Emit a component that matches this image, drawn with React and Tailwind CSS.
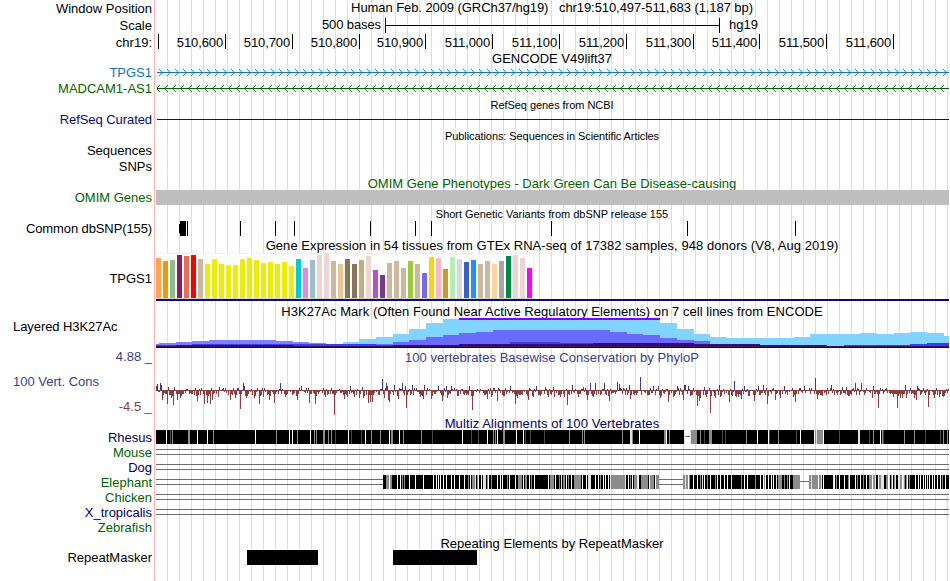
const GRID =
  "bg-[linear-gradient(to_right,#fff_1px,transparent_1px),repeating-linear-gradient(to_right,#dcdaf8_0px,#dcdaf8_1px,transparent_1px,transparent_12px)]";

// Small deterministic generator for the low-amplitude signal between peaks.
function makeRandom(seed) {
  let s = seed;
  return () => {
    s = (s * 1664525 + 1013904223) % 4294967296;
    return s / 4294967296;
  };
}

function Row({ h, label, color = "text-black", left, labelClass = "", children }) {
  return (
    <div className={`flex ${h}`}>
      <div
        className={`flex w-[154px] shrink-0 items-center whitespace-pre ${
          left ? "justify-start pl-[13px]" : "justify-end pr-[2px]"
        } ${color} ${labelClass}`}
      >
        {label}
      </div>
      <div className="w-[796px] shrink-0 border-l border-[#ffb4b4]">{children}</div>
    </div>
  );
}

function Title({ children, className = "text-black" }) {
  return (
    <div className={`flex h-full items-center justify-center whitespace-pre pr-px ${className}`}>
      {children}
    </div>
  );
}

function Plot({ y, h, children }) {
  return (
    <svg
      className="block"
      width="795"
      height={h}
      viewBox={`155 ${y} 795 ${h}`}
      shapeRendering="crispEdges"
    >
      {children}
    </svg>
  );
}

const TICKS = [
  [225, "510,600"], [292, "510,700"], [359, "510,800"], [425, "510,900"],
  [492, "511,000"], [559, "511,100"], [626, "511,200"], [693, "511,300"],
  [759, "511,400"], [826, "511,500"], [893, "511,600"],
];

// Chevrons are stepped one pixel per row, as on the browser's gene lines.
function Gene({ y, color, dir }) {
  const d = Array.from({ length: 99 }, (_, i) => i * 8)
    .map((m) =>
      [-3, -2, -1, 1, 2, 3]
        .map((o) => {
          const a = Math.abs(o);
          const x = dir > 0 ? 162 + m - a : 156 + m + a;
          return `M${x} ${y + o}h1v1h-1z`;
        })
        .join("")
    )
    .join("");
  return (
    <>
      <rect x="157" y={y} width="792" height="1" fill={color} />
      <path d={d} fill={color} fillOpacity="0.85" />
    </>
  );
}

const SNPS = [187, 240, 275, 294, 370, 415, 431, 551, 687, 795];

const TISSUES = [
  [40, "#ffa54f"], [37, "#ee9a00"], [38, "#8fbc8f"], [43, "#8b1c62"], [42, "#ee6a50"],
  [43, "#ff0000"], [39, "#cdb79e"], [34, "#eeee00"], [39, "#eeee00"], [34, "#eeee00"],
  [33, "#eeee00"], [33, "#eeee00"], [39, "#eeee00"], [40, "#eeee00"], [38, "#eeee00"],
  [35, "#eeee00"], [36, "#eeee00"], [34, "#eeee00"], [36, "#eeee00"], [32, "#eeee00"],
  [39, "#00cdcd"], [30, "#ee82ee"], [38, "#9ac0cd"], [43, "#eed5d2"], [45, "#eed5d2"],
  [37, "#cdb79e"], [34, "#eec591"], [39, "#8b7355"], [34, "#8b7355"], [38, "#cdaa7d"],
  [42, "#eed5d2"], [28, "#b452cd"], [23, "#7a378b"], [35, "#cdb79e"], [37, "#cdb79e"],
  [30, "#cdb79e"], [37, "#9acd32"], [34, "#cdb79e"], [25, "#7a67ee"], [41, "#ffd700"],
  [40, "#ffb6c1"], [29, "#cd9b1d"], [41, "#b4eeb4"], [39, "#d9d9d9"], [36, "#3a5fcd"],
  [38, "#1e90ff"], [34, "#cdb79e"], [37, "#cdb79e"], [34, "#ffd39b"], [37, "#a6a6a6"],
  [42, "#008b45"], [43, "#eed5d2"], [40, "#eed5d2"], [30, "#ff00ff"],
];

// Each step is [start x, top y]; the last entry closes the layer.
const CYAN = [
  [343, 342], [359, 339], [376, 337], [393, 334], [409, 329], [426, 323], [443, 319],
  [660, 323], [677, 329], [694, 334], [710, 337], [727, 338], [794, 337], [810, 334],
  [860, 333], [877, 334], [894, 333], [910, 332], [927, 333], [944, 336], [949, 347],
];
const LEFT_HUMP = [
  [156, 344], [159, 343], [176, 342], [192, 341], [209, 340], [276, 341], [293, 342],
  [309, 343], [326, 344], [343, 347],
];
const PURPLE = [
  [343, 345], [376, 344], [393, 342], [409, 340], [426, 337], [443, 335], [459, 333],
  [476, 332], [493, 330], [560, 330], [610, 332], [627, 334], [643, 335], [660, 338],
  [677, 340], [694, 341], [710, 344], [727, 345], [760, 347],
];
const BLUE = [
  [156, 345], [192, 344], [343, 344], [376, 345], [493, 344], [510, 342], [560, 343],
  [660, 344], [760, 346], [844, 345], [910, 344], [927, 343], [949, 347],
];
const DARK = [
  [156, 346], [176, 345], [293, 346], [393, 345], [459, 344], [493, 344], [593, 343],
  [694, 344], [760, 345], [827, 346], [949, 347],
];

function Steps({ steps, fill }) {
  return steps.slice(0, -1).map(([x, top], i) => (
    <rect key={x} x={x} y={top} width={steps[i + 1][0] - x} height={347 - top} fill={fill} />
  ));
}

const DOWN = {
  162: 10, 167: 14, 169: 5, 171: 8, 173: 15, 177: 10, 180: 8, 197: 11, 200: 5, 204: 14,
  207: 13, 210: 14, 212: 10, 218: 7, 230: 10, 235: 8, 240: 19, 246: 8, 254: 8, 259: 14,
  263: 7, 269: 10, 274: 13, 285: 7, 297: 10, 309: 13, 315: 14, 325: 7, 334: 25, 344: 9,
  347: 7, 354: 7, 359: 8, 363: 8, 368: 13, 370: 12, 372: 12, 384: 8, 388: 10, 389: 12,
  398: 9, 406: 18, 410: 5, 420: 7, 423: 9, 431: 9, 438: 7, 442: 11, 447: 8, 458: 6,
  472: 20, 485: 5, 487: 9, 491: 7, 497: 11, 503: 6, 515: 14, 517: 8, 528: 10, 533: 7,
  539: 5, 548: 7, 554: 7, 560: 7, 564: 7, 567: 15, 578: 7, 587: 10, 593: 7, 609: 11,
  630: 9, 660: 8, 668: 12, 673: 7, 683: 10, 691: 5, 692: 5, 697: 16, 699: 11, 700: 8,
  706: 7, 710: 23, 715: 8, 720: 7, 729: 12, 731: 5, 736: 7, 738: 7, 741: 9, 748: 6,
  754: 11, 767: 14, 775: 10, 780: 8, 793: 7, 795: 12, 817: 9, 821: 5, 848: 6, 872: 8,
  878: 18, 893: 7, 897: 18, 900: 8, 902: 8, 906: 8, 914: 8, 916: 10, 928: 17, 934: 8,
  939: 7, 943: 7,
};
const UP = {
  156: 4, 157: 6, 160: 7, 161: 5, 168: 3, 174: 3, 219: 3, 243: 7, 244: 4, 280: 7,
  301: 4, 350: 4, 362: 3, 382: 11, 386: 7, 387: 4, 394: 5, 402: 7, 405: 4, 412: 5,
  424: 5, 438: 4, 446: 4, 451: 4, 469: 4, 510: 4, 536: 4, 545: 3, 553: 3, 572: 5,
  583: 3, 590: 7, 595: 7, 604: 7, 617: 8, 619: 6, 629: 5, 640: 13, 653: 4, 658: 4,
  677: 4, 684: 5, 685: 5, 688: 4, 704: 3, 719: 5, 734: 9, 744: 4, 758: 4, 763: 5,
  784: 4, 804: 4, 815: 12, 831: 5, 842: 3, 846: 3, 855: 7, 861: 7, 873: 4, 905: 5,
  917: 4,
};

const CONSERVATION = (() => {
  const rnd = makeRandom(17);
  const out = [];
  for (let x = 156; x < 949; x++) {
    const a = rnd();
    const b = rnd();
    const near = DOWN[x - 1] || DOWN[x + 1];
    if (UP[x]) out.push([x, UP[x], 0]);
    else if (DOWN[x]) out.push([x, 0, DOWN[x]]);
    else if (a < 0.18) out.push([x, 1 + Math.floor(b * 2), 0]);
    else if (a < 0.9) out.push([x, 0, near ? 4 + Math.floor(b * 3) : 1 + Math.floor(b * 5)]);
  }
  return out;
})();

const W = "#ffffff";
const G = "#8c8c8c";
const D = "#484848";
const L = "#e2e2e2";
const RHESUS = [
  [166, 1, W], [170, 1, D], [172, 1, G], [188, 2, G], [197, 1, W], [207, 1, W], [213, 1, G],
  [255, 1, W], [276, 1, G], [289, 1, W], [292, 1, W], [297, 1, G], [310, 1, W], [314, 1, G],
  [316, 1, G], [323, 2, G], [328, 1, G], [331, 1, G], [335, 1, D], [348, 1, W], [351, 1, D],
  [361, 1, D], [365, 1, W], [371, 1, G], [380, 1, G], [389, 1, W], [391, 2, G], [399, 1, W],
  [403, 1, G], [421, 1, G], [432, 1, D], [462, 1, W], [471, 1, D], [478, 1, D], [487, 1, W],
  [493, 1, G], [495, 1, G], [497, 1, W], [503, 2, G], [516, 1, W], [523, 1, W], [525, 1, D],
  [530, 1, D], [544, 1, D], [569, 1, G], [582, 1, G], [584, 1, G], [622, 1, G], [630, 2, L],
  [632, 1, G], [639, 1, W], [664, 2, G], [666, 1, W], [669, 1, G], [691, 6, G], [700, 1, G],
  [704, 1, D], [709, 3, G], [722, 1, D], [725, 1, D], [746, 1, G], [757, 1, W], [768, 1, W],
  [769, 1, D], [778, 1, G], [796, 1, D], [800, 1, W], [814, 1, W], [815, 1, G], [816, 1, L],
  [817, 6, G], [823, 1, W], [839, 1, D], [858, 2, L], [869, 1, D], [873, 1, G], [880, 1, W],
  [882, 1, G], [883, 1, D], [904, 1, G], [914, 1, G], [925, 1, D], [940, 1, D], [943, 1, G],
  [947, 1, G],
];

// Per-pixel shades: # black, g gray, d dark, l light, . white
const ELEPHANT = [
  { x: 383, end: 467, pattern: "###ggg.gg#####.##.#g#g####.#####.#######.#########.##.#.#.##.##.####.##.####.####.##" },
  { x: 467, end: 545, pattern: "#g#.#gggl#g.##.#lll#g.##g#####.##.#.####g#.#####.##gggg#.#gg##.#g##.##########" },
  { x: 545, end: 611, pattern: "###.#gggg#.###g#l#gg#.#g##.##ggggggg#.###.#lll####.##.#g##.#.##.#l" },
  { x: 611, end: 659, pattern: "ggggggggggggggl##.#g#.#gggl.##ggggggg#.gggg#.ggg" },
  {
    x: 683,
    end: 800,
    pattern:
      "gglgg.g###.###.##g#l#.##g##.####g#.##.###.##.###l#########g##.##.#######g####.##.g.##.##.#.##l#gggg##g##g#.###ggggggg",
  },
  {
    x: 809,
    end: 949,
    pattern:
      "gglgggggg.ggl#.#########l.#g##.####.###g.#####.#g##.##g##.##ggg.ggl##.gglll##gg.l#g.#gl##llgg.lg#g.#g#####.##.#.##.#.#l#.##.#.##.##.#g##.###",
  },
];
const SHADES = { "#": "#000000", g: G, d: D, l: L, ".": W };

function Barcode({ x, end, pattern }) {
  return (
    <>
      <rect x={x} y="475" width={end - x} height="14" fill="#000" />
      {pattern
        .slice(0, end - x)
        .split("")
        .map((c, i) =>
          c === "#" ? null : (
            <rect key={i} x={x + i} y="475" width="1" height="14" fill={SHADES[c]} />
          )
        )}
    </>
  );
}

function DoubleLine({ y, spans = [[156, 949]] }) {
  return spans.map(([a, b]) => (
    <g key={a} fill="#6e6e6e">
      <rect x={a} y={y} width={b - a} height="1" />
      <rect x={a} y={y + 5} width={b - a} height="1" />
    </g>
  ));
}

export default function App() {
  return (
    <div className="flex h-[581px] w-[950px] overflow-hidden bg-white font-['Liberation_Sans',Arial,sans-serif] text-[13px] leading-none">
      <div className="relative w-[950px]">
        <div className={`absolute inset-y-0 left-[155px] w-[794px] ${GRID}`} />
        <div className="relative flex flex-col">
          <Row h="h-[17px]" label="Window Position">
            <Title className="pb-[3px] tracking-[-0.075px]">{"Human Feb. 2009 (GRCh37/hg19)   chr19:510,497-511,683 (1,187 bp)"}</Title>
          </Row>
          <Row h="h-[17px]" label="Scale">
            <div className="flex h-[16px] items-center">
              <span className="w-[226px] pb-[2px] text-right tracking-[-0.1px]">500 bases</span>
              <span className="ml-[4px] flex h-[15px] w-[335px] items-start border-x border-black pt-[7px]">
                <span className="h-px w-full bg-black" />
              </span>
              <span className="ml-[9px] pb-[2px]">hg19</span>
            </div>
          </Row>
          <Row h="h-[16px]" label="chr19:" labelClass="pt-px">
            <div className="flex h-[15px]">
              <span className="w-[4px] border-r border-black" />
              {TICKS.map(([x, t], i) => (
                <span
                  key={x}
                  className="flex shrink-0 items-center justify-end border-r border-black pr-[2px] pt-[2px] tracking-[-0.12px]"
                  style={{ width: x - (i ? TICKS[i - 1][0] : 158) }}
                >
                  {t}
                </span>
              ))}
            </div>
          </Row>
          <Row h="h-[16px]"><Title>GENCODE V49lift37</Title></Row>
          <Row h="h-[15px]" label="TPGS1" color="text-[#0c78b8]" labelClass="pb-[2px]">
            <Plot y={66} h={15}><Gene y={72} color="#0c78b8" dir={1} /></Plot>
          </Row>
          <Row h="h-[15px]" label="MADCAM1-AS1" color="text-[#006400]">
            <Plot y={81} h={15}><Gene y={88} color="#006400" dir={-1} /></Plot>
          </Row>
          <Row h="h-[17px]"><Title className="pt-[2px] text-[11px] tracking-[-0.05px]">RefSeq genes from NCBI</Title></Row>
          <Row h="h-[14px]" label="RefSeq Curated" color="text-[#0c0c78]" labelClass="pb-[2px] tracking-[-0.07px]">
            <Plot y={113} h={14}><rect x="157" y="119" width="792" height="1" fill="#0c0c78" /></Plot>
          </Row>
          <Row h="h-[17px]"><Title className="pt-[2px] text-[11px] tracking-[-0.08px]">Publications: Sequences in Scientific Articles</Title></Row>
          <Row h="h-[15px]" label="Sequences" labelClass="pb-[2px]" />
          <Row h="h-[16px]" label="SNPs" labelClass="pb-[2px]" />
          <Row h="h-[15px]">
            <Title className="pt-px text-[#006400]">OMIM Gene Phenotypes - Dark Green Can Be Disease-causing</Title>
          </Row>
          <Row h="h-[16px]" label="OMIM Genes" color="text-[#006400]" labelClass="pb-[2px]">
            <div className="ml-px h-[15px] w-[793px] bg-[#bebebe]" />
          </Row>
          <Row h="h-[15px]">
            <Title className="pt-[2px] text-[11px] tracking-[-0.02px]">Short Genetic Variants from dbSNP release 155</Title>
          </Row>
          <Row h="h-[16px]" label="Common dbSNP(155)" labelClass="pb-[2px] tracking-[-0.11px]">
            <Plot y={221} h={16}>
              <rect x="179" y="224" width="1" height="9" />
              <rect x="180" y="221" width="6" height="15" />
              {SNPS.map((x) => <rect key={x} x={x} y="221" width="1" height="15" />)}
            </Plot>
          </Row>
          <Row h="h-[16px]">
            <Title className="tracking-[0.06px]">Gene Expression in 54 tissues from GTEx RNA-seq of 17382 samples, 948 donors (V8, Aug 2019)</Title>
          </Row>
          <Row h="h-[51px]" label="TPGS1">
            <Plot y={253} h={51}>
              <rect x="156" y="253" width="378" height="46" fill="#fff" />
              <rect x="156" y="253" width="378" height="1" fill="#f0f0f0" />
              <rect x="533" y="253" width="1" height="46" fill="#f0f0f0" />
              <rect x="156" y="298" width="378" height="1" fill="#d4d4d4" />
              {TISSUES.map(([h, c], i) => (
                <rect key={i} x={156 + 7 * i} y={298 - h} width="5" height={h} fill={c} />
              ))}
              <rect x="156" y="299" width="793" height="2" fill="#0c0c78" />
            </Plot>
          </Row>
          <Row h="h-[14px]">
            <Title className="tracking-[0.045px]">H3K27Ac Mark (Often Found Near Active Regulatory Elements) on 7 cell lines from ENCODE</Title>
          </Row>
          <Row h="h-[30px]" label="Layered H3K27Ac" left labelClass="pb-[14px] tracking-[-0.07px]">
            <Plot y={318} h={30}>
              <Steps steps={CYAN} fill="#80d4ff" />
              <Steps steps={LEFT_HUMP} fill="#8080ff" />
              <Steps steps={PURPLE} fill="#6a6aff" />
              <Steps steps={BLUE} fill="#3c3cf0" />
              <Steps steps={DARK} fill="#38106c" />
              <rect x="459" y="318" width="201" height="2" fill="#8000ff" />
              <rect x="156" y="347" width="793" height="1" fill="#100838" />
            </Plot>
          </Row>
          <Row h="h-[17px]" label="4.88 _" color="text-[#3c3c8c]">
            <Title className="pt-px tracking-[0.045px] text-[#3c3c8c]">100 vertebrates Basewise Conservation by PhyloP</Title>
          </Row>
          <div className="flex h-[50px]">
            <div className="flex w-[154px] shrink-0 flex-col">
              <div className="flex h-[34px] items-center pb-[2px] pl-[13px] text-[#3c3c8c]">100 Vert. Cons</div>
              <div className="flex h-[16px] items-center justify-end whitespace-pre pb-[2px] pr-[2px] text-[#8c3c3c]">-4.5 _</div>
            </div>
            <div className="border-l border-[#ffb4b4]">
              <Plot y={365} h={50}>
                <rect x="156" y="390" width="793" height="1" fill="#8c3c3c" />
                {CONSERVATION.map(([x, up, down]) =>
                  up ? (
                    <rect key={x} x={x} y={390 - up} width="1" height={up} fill="#3c3c8c" />
                  ) : (
                    <rect key={x} x={x} y="390" width="1" height={down} fill="#8c3c3c" />
                  )
                )}
                <rect x="334" y="413" width="1" height="2" fill="#ff00ff" />
              </Plot>
            </div>
          </div>
          <Row h="h-[15px]">
            <Title className="pt-px tracking-[0.1px] text-[#000064]">Multiz Alignments of 100 Vertebrates</Title>
          </Row>
          <Row h="h-[15px]" label="Rhesus" color="text-[#000064]">
            <Plot y={430} h={15}>
              <rect x="156" y="430" width="528" height="14" />
              <rect x="684" y="430" width="1" height="14" fill={L} />
              <rect x="685" y="436" width="5" height="1" fill="#6e6e6e" />
              <rect x="690" y="430" width="1" height="14" fill={L} />
              <rect x="691" y="430" width="258" height="14" />
              {RHESUS.map(([x, w, c]) => <rect key={x} x={x} y="430" width={w} height="14" fill={c} />)}
            </Plot>
          </Row>
          <Row h="h-[15px]" label="Mouse" color="text-[#006400]">
            <Plot y={445} h={15}><DoubleLine y={449} /></Plot>
          </Row>
          <Row h="h-[15px]" label="Dog" color="text-[#000064]">
            <Plot y={460} h={15}><DoubleLine y={464} /></Plot>
          </Row>
          <Row h="h-[15px]" label="Elephant" color="text-[#006400]">
            <Plot y={475} h={15}>
              <DoubleLine y={479} spans={[[156, 383], [659, 683]]} />
              <rect x="800" y="481" width="9" height="1" fill="#6e6e6e" />
              {ELEPHANT.map((block) => <Barcode key={block.x} {...block} />)}
            </Plot>
          </Row>
          <Row h="h-[15px]" label="Chicken" color="text-[#006400]">
            <Plot y={490} h={15}><DoubleLine y={494} /></Plot>
          </Row>
          <Row h="h-[15px]" label="X_tropicalis" color="text-[#000064]">
            <Plot y={505} h={15}><DoubleLine y={509} /></Plot>
          </Row>
          <Row h="h-[15px]" label="Zebrafish" color="text-[#006400]" />
          <Row h="h-[15px]"><Title className="pt-px tracking-[0.02px]">Repeating Elements by RepeatMasker</Title></Row>
          <Row h="h-[31px]" label="RepeatMasker" labelClass="pb-[17px]">
            <Plot y={550} h={31}>
              <rect x="247" y="550" width="71" height="15" />
              <rect x="393" y="550" width="84" height="15" />
            </Plot>
          </Row>
        </div>
      </div>
    </div>
  );
}
